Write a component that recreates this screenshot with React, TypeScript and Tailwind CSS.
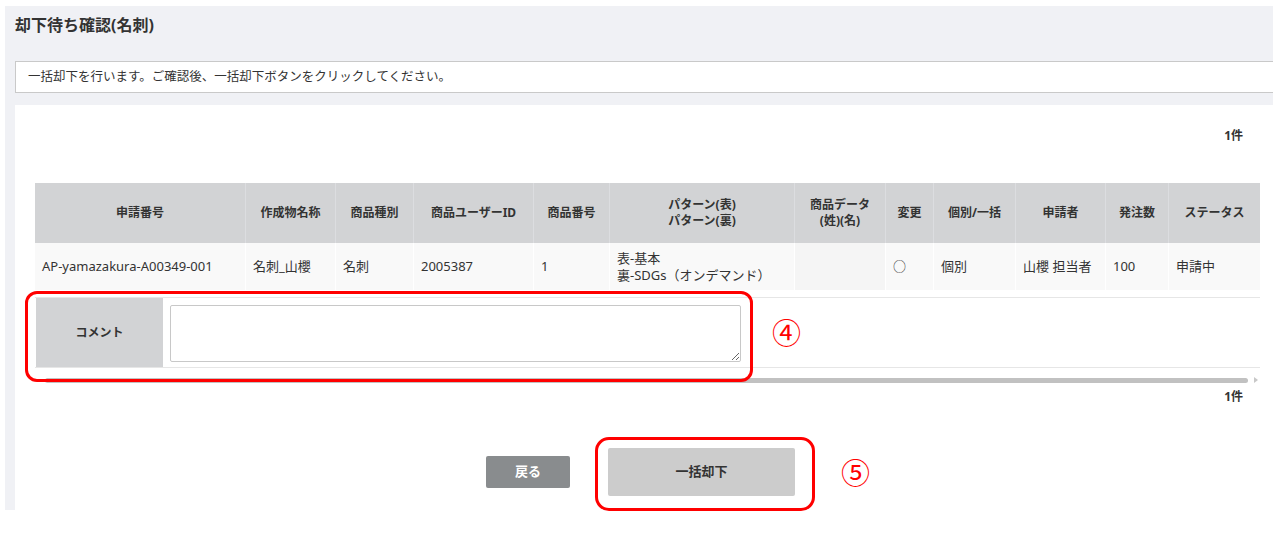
import React from 'react';

const gridCols =
  'grid grid-cols-[210px_90px_78px_120px_76px_185px_91px_48px_82px_90px_63px_92px]';

const headers: React.ReactNode[] = [
  '申請番号',
  '作成物名称',
  '商品種別',
  '商品ユーザーID',
  '商品番号',
  <>
    パターン(表)
    <br />
    パターン(裏)
  </>,
  <>
    商品データ
    <br />
    (姓)(名)
  </>,
  '変更',
  '個別/一括',
  '申請者',
  '発注数',
  'ステータス',
];

const row: React.ReactNode[] = [
  'AP-yamazakura-A00349-001',
  '名刺_山櫻',
  '名刺',
  '2005387',
  '1',
  <>
    表-基本
    <br />
    裏-SDGs（オンデマンド）
  </>,
  '',
  '○',
  '個別',
  '山櫻 担当者',
  '100',
  '申請中',
];

const font = { fontFamily: '"Noto Sans", "Noto Sans CJK JP", sans-serif' };

const App: React.FC = () => {
  return (
    <div className="relative min-h-screen bg-white pl-[5px] pt-[6px] text-[#333]" style={font}>
      <div className="flex h-[504px] w-[1268px] flex-col bg-[#f0f1f5] pl-[10px]">
        <h1 className="pt-[8px] text-[16px] font-bold leading-[22px] text-[#333]">
          却下待ち確認(名刺)
        </h1>

        <div className="mt-[25px] flex h-[32px] items-center border border-r-0 border-[#c9c9c9] bg-white px-[12px] text-[12.5px]">
          一括却下を行います。ご確認後、一括却下ボタンをクリックしてください。
        </div>

        <div className="mt-[12px] flex-1 bg-white px-[20px]">
          <div className="flex w-[1225px] justify-end pr-[17px] pt-[23px] text-[12px] font-bold leading-[16px]">
            1件
          </div>

          {/* table */}
          <div className="mt-[39px] w-[1225px]">
            <div className={`${gridCols} h-[60px] bg-[#d2d3d5] text-[12px] font-bold leading-[16px]`}>
              {headers.map((h, i) => (
                <div
                  key={i}
                  className={`flex items-center justify-center text-center ${i > 0 ? 'border-l border-[#dcdde0]' : ''}`}
                >
                  {h}
                </div>
              ))}
            </div>
            <div className={`${gridCols} h-[47px] bg-[#f9f9f9] text-[13px] leading-[17px]`}>
              {row.map((c, i) => (
                <div
                  key={i}
                  className={`flex items-center whitespace-nowrap pl-[7px] ${i > 0 ? 'border-l border-white' : ''} ${i === 6 ? 'bg-[#f5f5f5]' : ''}`}
                >
                  {c}
                </div>
              ))}
            </div>
          </div>

          {/* comment */}
          <div className="mt-[7px] flex h-[71px] w-[1225px] border-y border-[#e6e6e6]">
            <div className="ml-[1px] flex w-[127px] items-center justify-center bg-[#d2d3d5] text-[12px] font-bold">
              コメント
            </div>
            <div className="px-[7px] py-[7px]">
              <textarea className="h-[57px] w-[571px] rounded-[2px] border border-[#c8c8c8] bg-white outline-none" />
            </div>
          </div>

          {/* scrollbar */}
          <div className="mt-[9px] flex w-[1225px] items-center">
            <div className="ml-[10px] h-[5px] w-[1203px] rounded-full bg-[#c1c1c1]" />
            <div className="ml-[6px] h-0 w-0 border-y-[3px] border-l-[4px] border-y-transparent border-l-[#c8c8c8]" />
          </div>

          <div className="mt-[6px] flex w-[1225px] justify-end pr-[17px] text-[12px] font-bold leading-[16px]">
            1件
          </div>

          {/* buttons */}
          <div className="mt-[43px] flex w-[1211px] items-center justify-center gap-[38px]">
            <button className="h-[32px] w-[84px] rounded-[2px] bg-[#898c8e] text-[13px] font-bold text-white">
              戻る
            </button>
            <button className="h-[48px] w-[187px] rounded-[2px] bg-[#cccccc] text-[13px] font-bold text-[#333]">
              一括却下
            </button>
          </div>
        </div>
      </div>

      {/* annotations */}
      <div className="pointer-events-none absolute left-[25px] top-[291px] h-[91px] w-[728px] rounded-[12px] border-[3px] border-[#ff0000]" />
      <div className="pointer-events-none absolute left-[772px] top-[316px] text-[29px] leading-[34px] text-[#ff0000]">
        ④
      </div>
      <div className="pointer-events-none absolute left-[595px] top-[437px] h-[74px] w-[220px] rounded-[14px] border-[3px] border-[#ff0000]" />
      <div className="pointer-events-none absolute left-[841px] top-[456px] text-[29px] leading-[34px] text-[#ff0000]">
        ⑤
      </div>
    </div>
  );
};

export default App;
